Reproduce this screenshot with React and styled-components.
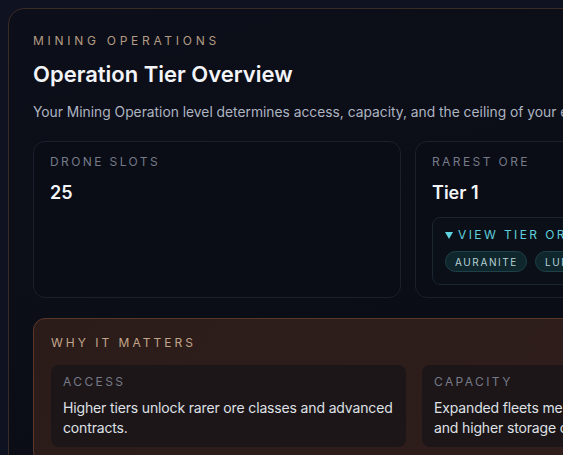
import styled, { createGlobalStyle } from "styled-components";

const GlobalStyle = createGlobalStyle`
  html, body {
    margin: 0;
    padding: 0;
    background: #0e1221;
    overflow: hidden;
  }
  body {
    font-family: Inter, "Noto Sans", "Liberation Sans", sans-serif;
    -webkit-font-smoothing: antialiased;
  }
`;

const Page = styled.div`
  padding: 8px;
  width: 1240px;
`;

const Panel = styled.section`
  border: 1px solid #3a2b27;
  border-radius: 16px;
  background: linear-gradient(160deg, #0c0e19 0%, #0b0d16 60%, #100e15 100%);
  padding: 24px;
`;

const Eyebrow = styled.div`
  font-size: 12px;
  line-height: 16px;
  letter-spacing: ${(p) => p.spacing || "0.31em"};
  text-transform: uppercase;
  color: ${(p) => p.color || "#b39c84"};
`;

const Title = styled.h1`
  margin: 10px 0 0;
  font-size: 22px;
  line-height: 30px;
  font-weight: 600;
  color: #f2f4f8;
`;

const Desc = styled.p`
  margin: 12px 0 0;
  font-size: 13.8px;
  line-height: 22px;
  color: #aeb4c0;
  white-space: nowrap;
`;

const StatGrid = styled.div`
  margin-top: 18px;
  display: grid;
  grid-template-columns: repeat(3, 368px);
  gap: 14px;
`;

const StatCard = styled.div`
  height: 157px;
  box-sizing: border-box;
  border: 1px solid #1c202c;
  border-radius: 12px;
  background: #0a0c16;
  padding: 12px 16px;
`;

const StatLabel = styled.div`
  font-size: 12px;
  line-height: 16px;
  letter-spacing: 0.2em;
  text-transform: uppercase;
  color: #757b88;
`;

const StatValue = styled.div`
  margin-top: 11px;
  font-size: 18px;
  line-height: 24px;
  font-weight: 600;
  color: #f3f5f8;
`;

const Details = styled.div`
  margin-top: 12px;
  border: 1px solid #1b2530;
  border-radius: 8px;
  background: #0b0f18;
  padding: 9px 12px 12px;
`;

const Summary = styled.div`
  display: flex;
  align-items: center;
  gap: 5px;
  font-size: 12px;
  line-height: 16px;
  letter-spacing: 0.2em;
  text-transform: uppercase;
  color: #5fcfdc;
  white-space: nowrap;
`;

const Caret = styled.span`
  width: 0;
  height: 0;
  border-left: 4px solid transparent;
  border-right: 4px solid transparent;
  border-top: 7px solid #5fd3e0;
`;

const ChipRow = styled.div`
  margin-top: 8px;
  display: flex;
  gap: 8px;
`;

const Chip = styled.span`
  display: inline-flex;
  align-items: center;
  height: 21px;
  box-sizing: border-box;
  padding: 0 8px 0 9px;
  border-radius: 999px;
  border: 1px solid #1f4148;
  background: #0f262c;
  font-size: 10px;
  letter-spacing: 0.16em;
  text-transform: uppercase;
  color: #b7d3d7;
`;

const Matters = styled.div`
  margin-top: 20px;
  border: 1px solid #5a3829;
  border-radius: 12px;
  background: linear-gradient(120deg, #2b1c1a 0%, #2f1e1b 50%, #2c1c1a 100%);
  padding: 16px 17px;
`;

const ReasonGrid = styled.div`
  margin-top: 14px;
  display: grid;
  grid-template-columns: repeat(3, 355px);
  gap: 16px;
`;

const ReasonCard = styled.div`
  border-radius: 8px;
  background: #1d1618;
  padding: 9px 12px;
  box-sizing: border-box;
`;

const ReasonText = styled.p`
  margin: 8px 0 0;
  font-size: 14px;
  line-height: 20px;
  letter-spacing: -0.15px;
  color: #dfe1e6;
`;

const reasons = [
  { title: "Access", text: "Higher tiers unlock rarer ore classes and advanced contracts." },
  { title: "Capacity", text: "Expanded fleets mean more concurrent dig sites and higher storage caps." },
  { title: "Ceiling", text: "Your tier caps the maximum yield and reward multipliers." },
];

export default function App() {
  return (
    <>
      <GlobalStyle />
      <Page>
        <Panel>
          <Eyebrow>Mining Operations</Eyebrow>
          <Title>Operation Tier Overview</Title>
          <Desc>
            Your Mining Operation level determines access, capacity, and the ceiling of your expedition rewards.
          </Desc>
          <StatGrid>
            <StatCard>
              <StatLabel>Drone Slots</StatLabel>
              <StatValue>25</StatValue>
            </StatCard>
            <StatCard>
              <StatLabel>Rarest Ore</StatLabel>
              <StatValue>Tier 1</StatValue>
              <Details>
                <Summary>
                  <Caret />
                  View Tier Ores
                </Summary>
                <ChipRow>
                  <Chip>Auranite</Chip>
                  <Chip>Luminite</Chip>
                  <Chip>Ferrox</Chip>
                </ChipRow>
              </Details>
            </StatCard>
            <StatCard>
              <StatLabel>Storage</StatLabel>
              <StatValue>1,200</StatValue>
            </StatCard>
          </StatGrid>
          <Matters>
            <Eyebrow color="#c2a58b" spacing="0.25em">Why It Matters</Eyebrow>
            <ReasonGrid>
              {reasons.map((r) => (
                <ReasonCard key={r.title}>
                  <StatLabel>{r.title}</StatLabel>
                  <ReasonText>{r.text}</ReasonText>
                </ReasonCard>
              ))}
            </ReasonGrid>
          </Matters>
        </Panel>
      </Page>
    </>
  );
}
